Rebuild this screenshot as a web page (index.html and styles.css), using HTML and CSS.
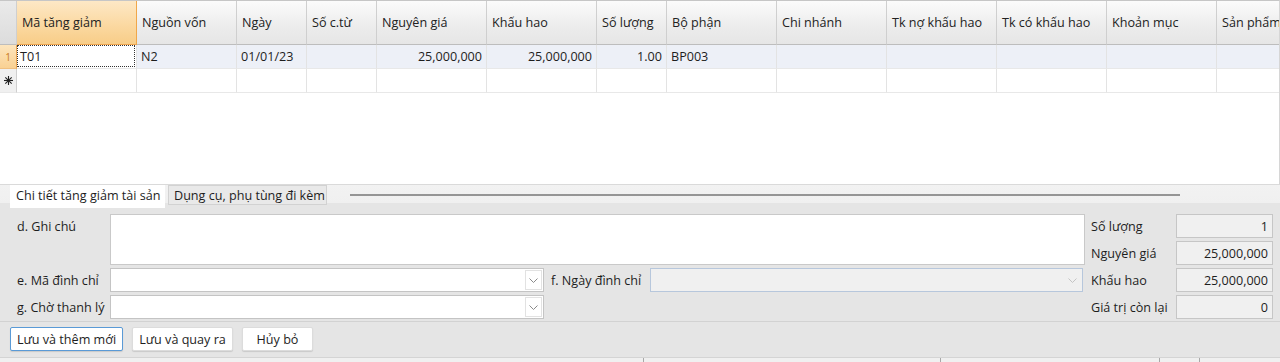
FILE: index.html
```html
<!DOCTYPE html>
<html lang="vi">
<head>
<meta charset="utf-8">
<title>Chi tiết tăng giảm tài sản</title>
<link rel="stylesheet" href="styles.css">
</head>
<body>
<div class="app">
  <div class="grid">
    <div class="grow ghead">
      <div class="c corner"></div>
      <div class="c hsel">Mã tăng giảm</div>
      <div class="c">Nguồn vốn</div>
      <div class="c">Ngày</div>
      <div class="c">Số c.từ</div>
      <div class="c">Nguyên giá</div>
      <div class="c">Khấu hao</div>
      <div class="c">Số lượng</div>
      <div class="c">Bộ phận</div>
      <div class="c">Chi nhánh</div>
      <div class="c">Tk nợ khấu hao</div>
      <div class="c">Tk có khấu hao</div>
      <div class="c">Khoản mục</div>
      <div class="c">Sản phẩm</div>
    </div>
    <div class="grow data">
      <div class="c ind sel">1</div>
      <div class="c focus"><span>T01</span></div>
      <div class="c">N2</div>
      <div class="c">01/01/23</div>
      <div class="c"></div>
      <div class="c num">25,000,000</div>
      <div class="c num">25,000,000</div>
      <div class="c num">1.00</div>
      <div class="c">BP003</div>
      <div class="c"></div>
      <div class="c"></div>
      <div class="c"></div>
      <div class="c"></div>
      <div class="c"></div>
    </div>
    <div class="grow newrow">
      <div class="c ind star"><svg width="9" height="9" viewBox="0 0 9 9"><g stroke="#222" stroke-width="1.1"><line x1="4.5" y1="0" x2="4.5" y2="9"/><line x1="0" y1="4.5" x2="9" y2="4.5"/><line x1="1.3" y1="1.3" x2="7.7" y2="7.7"/><line x1="7.7" y1="1.3" x2="1.3" y2="7.7"/></g></svg></div>
      <div class="c"></div>
      <div class="c"></div>
      <div class="c"></div>
      <div class="c"></div>
      <div class="c"></div>
      <div class="c"></div>
      <div class="c"></div>
      <div class="c"></div>
      <div class="c"></div>
      <div class="c"></div>
      <div class="c"></div>
      <div class="c"></div>
      <div class="c"></div>
    </div>
  </div>

  <div class="tabs">
    <div class="tab active">Chi tiết tăng giảm tài sản</div>
    <div class="tab">Dụng cụ, phụ tùng đi kèm</div>
    <div class="tabline"></div>
  </div>

  <div class="panel">
    <div class="lbl r1">d. Ghi chú</div>
    <div class="memo"></div>

    <div class="lbl r3">e. Mã đình chỉ</div>
    <div class="combo c-e"><span class="txt"></span><span class="btn"><svg width="9" height="5" viewBox="0 0 9 5"><polyline points="0.5,0.5 4.5,4.5 8.5,0.5" fill="none" stroke="#8a8a8a" stroke-width="1"/></svg></span></div>
    <div class="lbl lbl-f">f. Ngày đình chỉ</div>
    <div class="combo c-f disabled"><span class="txt"></span><span class="btn"><svg width="9" height="5" viewBox="0 0 9 5"><polyline points="0.5,0.5 4.5,4.5 8.5,0.5" fill="none" stroke="#c4c4c4" stroke-width="1"/></svg></span></div>

    <div class="lbl r4">g. Chờ thanh lý</div>
    <div class="combo c-g"><span class="txt"></span><span class="btn"><svg width="9" height="5" viewBox="0 0 9 5"><polyline points="0.5,0.5 4.5,4.5 8.5,0.5" fill="none" stroke="#8a8a8a" stroke-width="1"/></svg></span></div>

    <div class="rlbl q1">Số lượng</div>
    <div class="rval q1">1</div>
    <div class="rlbl q2">Nguyên giá</div>
    <div class="rval q2">25,000,000</div>
    <div class="rlbl q3">Khấu hao</div>
    <div class="rval q3">25,000,000</div>
    <div class="rlbl q4">Giá trị còn lại</div>
    <div class="rval q4">0</div>
  </div>

  <div class="buttons">
    <button class="b focused">Lưu và thêm mới</button>
    <button class="b b2">Lưu và quay ra</button>
    <button class="b b3">Hủy bỏ</button>
  </div>

  <div class="status">
    <div class="s s1"></div>
    <div class="s s2"></div>
    <div class="s s3"></div>
    <div class="s s4"></div>
    <div class="s s5"></div>
  </div>
</div>
</body>
</html>
```

FILE: styles.css
```css
* { box-sizing: border-box; }
html, body { margin: 0; padding: 0; }
body {
  width: 1280px;
  height: 362px;
  overflow: hidden;
  background: #e5e5e5;
  font-family: "Open Sans", "Noto Sans", "DejaVu Sans", sans-serif;
  font-size: 12.6px;
  color: #1e1e1e;
}
.app { display: flex; flex-direction: column; height: 362px; }

/* ---------- grid ---------- */
.grid {
  height: 185px;
  background: #fff;
  border-top: 1px solid #c6c6c6;
  border-bottom: 1px solid #dadada;
  border-right: 1px solid #d6d6d6;
  overflow: hidden;
  flex: none;
}
.grow {
  display: grid;
  grid-template-columns: 17px 120px 100px 70px 70px 110px 110px 70px 110px 110px 110px 110px 110px 110px;
  width: 1327px;
}
.c {
  border-right: 1px solid #e3e3e3;
  border-bottom: 1px solid #e8e8e8;
  padding: 0 4px;
  display: flex;
  align-items: center;
  white-space: nowrap;
  overflow: hidden;
}
.ghead { height: 44px; }
.ghead .c {
  background: linear-gradient(#fbfbfb, #ececec 60%, #e6e6e6);
  border-right: 1px solid #cfcfcf;
  border-bottom: 1px solid #bdbdbd;
  padding-left: 5px;
  padding-bottom: 1px;
  color: #222;
}
.ghead .corner { background: linear-gradient(#eaeaea, #dcdcdc); }
.ghead .hsel {
  background: linear-gradient(#fde8c6, #fbd9a2 55%, #f8cd88);
  border-right: 1px solid #f0a74a;
  border-bottom: 1px solid #eea550;
}
.data { height: 24px; }
.data .c { background: #edf0f7; }
.newrow { height: 24px; }
.ind {
  padding: 0;
  justify-content: center;
  background: #efefef;
  border-right: 1px solid #cfcfcf;
}
.data .ind.sel {
  background: linear-gradient(#fde5bd, #f9d193);
  color: #c87a1c;
  font-size: 10px;
  border-right: 1px solid #eea550;
  border-bottom: 1px solid #f0c080;
}
.newrow .ind { background: #f0f0f0; }
.data .c.focus {
  background: #fff;
  padding: 0;
  align-items: stretch;
}
.focus span {
  flex: 1;
  margin: 0 1px 1px 0;
  border: 1px dotted #333;
  padding-left: 2px;
  display: flex;
  align-items: center;
}
.num { justify-content: flex-end; }

/* ---------- tabs ---------- */
.tabs {
  height: 23px;
  flex: none;
  display: flex;
  align-items: flex-start;
  padding-left: 10px;
  background: linear-gradient(#f2f2f2 0, #f0f0f0 18px, #e5e5e5 18px);
}
.tab {
  height: 20px;
  padding: 0 5px;
  display: flex;
  align-items: center;
  white-space: nowrap;
}
.tab.active {
  height: 23px;
  width: 155px;
  padding-left: 6px;
  background: #fff;
  padding-bottom: 2px;
}
.tab:not(.active) {
  margin-left: 3px;
  width: 159px;
  background: #e9e9e9;
  border: 1px solid #d2d2d2;
}
.tabline {
  margin-left: 23px;
  margin-top: 9px;
  width: 830px;
  height: 2px;
  background: #959595;
}

/* ---------- panel ---------- */
.panel {
  flex: none;
  height: 114px;
  padding: 6px 7px 0 17px;
  border-bottom: 1px solid #d2d2d2;
  display: grid;
  grid-template-columns: 93px 434px 106px 435px 6px 85px 97px;
  grid-template-rows: 24px 24px 24px 24px;
  row-gap: 3px;
}
.lbl { display: flex; align-items: center; white-space: nowrap; grid-column: 1; }
.lbl.r1 { grid-row: 1; }
.lbl.r3 { grid-row: 3; }
.lbl.r4 { grid-row: 4; }
.lbl.lbl-f { grid-row: 3; grid-column: 3; padding-left: 7px; }
.memo {
  grid-column: 2 / 5;
  grid-row: 1 / 3;
  background: #fff;
  border: 1px solid #c9c9c9;
}
.combo {
  display: flex;
  background: #fff;
  border: 1px solid #c4c4c4;
  padding: 1px;
}
.combo .txt { flex: 1; }
.combo .btn {
  width: 17px;
  display: flex;
  align-items: center;
  justify-content: center;
  border: 1px solid #e2e2e2;
  background: #fff;
}
.c-e { grid-column: 2; grid-row: 3; }
.c-g { grid-column: 2; grid-row: 4; }
.c-f { grid-column: 4; grid-row: 3; margin-right: 2px; }
.combo.disabled { background: #f0f0f0; border-color: #b7c7dc; }
.combo.disabled .btn { background: #f0f0f0; border-color: transparent; }
.rlbl { grid-column: 6; display: flex; align-items: center; white-space: nowrap; }
.rval {
  grid-column: 7;
  display: flex;
  align-items: center;
  justify-content: flex-end;
  padding-right: 4px;
  background: #f0f0f0;
  border: 1px solid #c6c6c6;
}
.q1 { grid-row: 1; }
.q2 { grid-row: 2; }
.q3 { grid-row: 3; }
.q4 { grid-row: 4; }

/* ---------- buttons ---------- */
.buttons {
  flex: none;
  height: 35px;
  display: flex;
  align-items: flex-start;
  padding: 5px 0 0 10px;
  gap: 9px;
}
.b {
  font: inherit;
  color: #1e1e1e;
  height: 24px;
  background: #fff;
  border: 1px solid #dcdcdc;
  border-radius: 2px;
  box-shadow: 0 1px 1px rgba(0,0,0,0.12);
  padding: 0;
}
.b.focused { width: 113px; border-color: #5a9ad6; }
.b.b2 { width: 101px; }
.b.b3 { width: 71px; }

/* ---------- status ---------- */
.status {
  flex: 1;
  display: flex;
  background: #f0f0f0;
  border-top: 1px solid #d4d4d4;
}
.s { border-right: 1px solid #a8a8a8; }
.s1 { width: 644px; }
.s2 { width: 297px; }
.s3 { width: 219px; }
.s4 { width: 40px; }
.s5 { flex: 1; border-right: none; }
```
